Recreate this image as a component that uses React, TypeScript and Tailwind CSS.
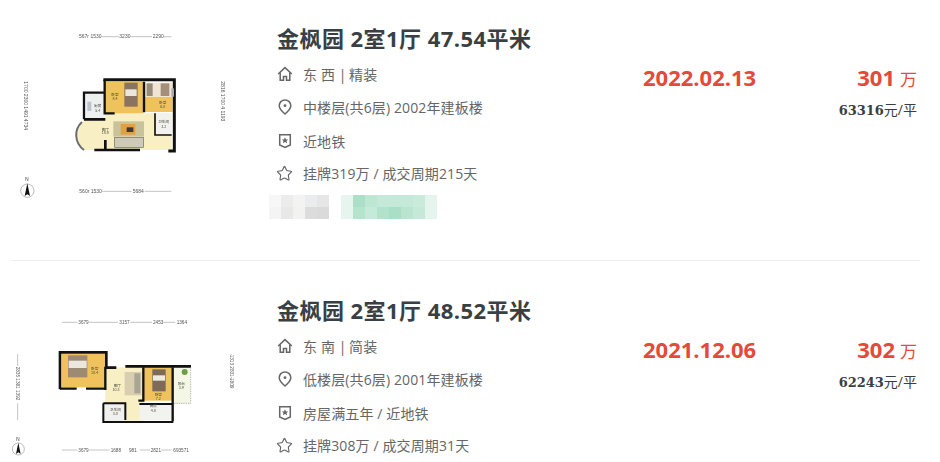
import { Star } from "lucide-react";

const font = "font-['Open_Sans','Noto_Sans_CJK_SC',sans-serif]";

const grayCells = [
  "bg-[#f7f7f7]", "bg-[#ececec]", "bg-[#f3f3f2]", "bg-[#ebecee]", "bg-[#e6e6e6]",
  "bg-[#f4f4f4]", "bg-[#e8e8e8]", "bg-[#f2f2f1]", "bg-[#dcdcdc]", "bg-[#dadadb]",
];
const greenCells = [
  "bg-[#e6f5ee]", "bg-[#acdfc8]", "bg-[#bde6d3]", "bg-[#c4e9d8]", "bg-[#c4e9d8]", "bg-[#c4e9d8]", "bg-[#c8ebdb]", "bg-[#e4f5ed]",
  "bg-[#e6f5ee]", "bg-[#b4e3ce]", "bg-[#c6ead9]", "bg-[#b2e2cc]", "bg-[#a9dfc6]", "bg-[#b8e4d0]", "bg-[#c4e9d8]", "bg-[#e4f5ed]",
];

function HouseIcon() {
  return (
    <svg width="16" height="16" viewBox="0 0 16 16" fill="none" stroke="#666" strokeWidth="1.5">
      <path d="M1.2 8 8 1.600 14.800 8" />
      <path d="M3.200 6.400v7.800h3.300V10.400h3v3.800h3.300V6.400" />
    </svg>
  );
}

function PinIcon() {
  return (
    <svg width="16" height="16" viewBox="0 0 16 16" fill="none" stroke="#666" strokeWidth="1.5">
      <path d="M8 15C4.800 12.200 2.200 9.600 2.200 6.700a5.800 5.800 0 0 1 11.600 0c0 2.900-2.600 5.500-5.800 8.300Z" />
      <circle cx="8" cy="6.700" r="1.400" fill="#666" stroke="none" />
    </svg>
  );
}

function BadgeIcon() {
  return (
    <svg width="16" height="16" viewBox="0 0 16 16" fill="none" stroke="#666" strokeWidth="1.5">
      <path d="M2.700 1.700h10.600v10.200L8 14.400l-5.300-2.500Z" />
      <path d="m8 4.300 1 2.100 2.200.2-1.700 1.400.6 2.200L8 9l-2.100 1.200.6-2.200-1.700-1.400L7 6.400Z" fill="#666" stroke="none" />
    </svg>
  );
}

function InfoLine({ icon, text, className }: { icon: React.ReactNode; text: string; className: string }) {
  return (
    <div className={`flex items-center h-[20px] text-[14px] tracking-[0.12px] text-[#666] ${className}`}>
      <span className="w-[26px] shrink-0 flex">{icon}</span>
      <span className="whitespace-pre">{text}</span>
    </div>
  );
}

function PlanOne() {
  return (
    <svg width="260" height="230" viewBox="0 0 780 690" className="blur-[0.6px]">
      <g fontSize="15" fill="#555" fontFamily="Liberation Sans, sans-serif">
        <text x="237" y="115">567r 1530</text>
        <text x="358" y="115">3230</text>
        <text x="458" y="115">2290</text>
        <text x="238" y="580">560r 1530</text>
        <text x="398" y="580">5684</text>
        <text transform="translate(71 244) rotate(90)">1700  2300  1491 4734</text>
        <text transform="translate(663 244) rotate(90)">2816  1700  4 1193</text>
      </g>
      <path d="M305 110h52M392 110h64M490 110h24M305 574h90M434 574h80" stroke="#888" strokeWidth="1.500" />
      <path d="M250 365C225 385 225 430 250 450H515V340H316V358H250Z" fill="#f8efc4" />
      <rect x="316" y="245" width="114" height="95" fill="#efc25e" />
      <rect x="434" y="290" width="84" height="46" fill="#efc25e" />
      <rect x="434" y="248" width="84" height="42" fill="#efe5d2" />
      <rect x="440" y="250" width="18" height="38" fill="#9a8a78" />
      <rect x="482" y="250" width="26" height="38" fill="#a58f7c" />
      <rect x="373" y="248" width="40" height="72" fill="#8a7361" />
      <rect x="376" y="268" width="34" height="20" fill="#ece7dc" />
      <rect x="258" y="282" width="56" height="74" fill="#eef0f0" />
      <rect x="262" y="305" width="12" height="28" fill="#b9c4cc" />
      <rect x="468" y="342" width="46" height="60" fill="#f1f1ef" />
      <rect x="340" y="364" width="92" height="46" fill="#c9c39c" />
      <rect x="362" y="372" width="44" height="32" fill="#e0a145" />
      <rect x="380" y="382" width="20" height="14" fill="#3d3a33" />
      <rect x="344" y="412" width="86" height="30" fill="#cfc9b8" stroke="#6a665c" strokeWidth="2" />
      <g fill="none" stroke="#111">
        <path d="M310 239h213v214h-18" strokeWidth="9" />
        <path d="M252 358v-80h60M314 240v100h30M432 245v92M320 340h20" strokeWidth="7" />
        <path d="M252 358h64M316 420v28M283 450h137" strokeWidth="8" />
        <path d="M465 340v65h50" strokeWidth="5" />
      </g>
      <path d="M518 265v25" stroke="#aaa" strokeWidth="8" />
      <path d="M246 366c-24 22-24 62 6 84" fill="none" stroke="#6c6c6c" strokeWidth="6" />
      <g fontSize="11" fill="#4a4a3a" fontFamily="Noto Sans CJK SC, sans-serif" textAnchor="middle">
        <text x="345" y="288">卧室</text>
        <text x="345" y="301">8.4</text>
        <text x="488" y="312">卧室</text>
        <text x="488" y="325">6.0</text>
        <text x="293" y="322">厨房</text>
        <text x="293" y="335">5.4</text>
        <text x="491" y="368">卫生间</text>
        <text x="491" y="383">3.2</text>
        <text x="316" y="392">客厅</text>
        <text x="316" y="402">18.8</text>
      </g>
      <circle cx="82" cy="572" r="20" fill="#fff" stroke="#999" strokeWidth="2" />
      <path d="M82 550 74 588l8-5 8 5Z" fill="#111" />
      <text x="76" y="543" fontSize="14" fill="#333" fontFamily="Liberation Sans, sans-serif">N</text>
    </svg>
  );
}

function PlanTwo() {
  return (
    <svg width="260" height="230" viewBox="0 -54 780 690" className="blur-[0.6px]">
      <g fontSize="14" fill="#555" fontFamily="Liberation Sans, sans-serif">
        <text x="235" y="102">3679</text>
        <text x="358" y="102">3157</text>
        <text x="459" y="102">2453</text>
        <text x="530" y="102">1364</text>
        <text x="235" y="485">3679</text>
        <text x="332" y="485">1688</text>
        <text x="387" y="485">981</text>
        <text x="452" y="485">2821</text>
        <text x="520" y="485">693571</text>
        <text transform="translate(48 230) rotate(90)">2835  1381  1392</text>
        <text transform="translate(689 194) rotate(90)">1313  2831  1809</text>
      </g>
      <path d="M186 97h46M268 97h86M390 97h66M490 97h36M186 480h46M268 480h60M420 480h30M484 480h30M53 192v36M53 340v50M694 192v4M694 260v10" stroke="#888" strokeWidth="1.500" />
      <rect x="186" y="192" width="130" height="100" fill="#efc25e" />
      <rect x="316" y="232" width="115" height="160" fill="#f8efc4" />
      <rect x="431" y="232" width="86" height="100" fill="#efc25e" />
      <rect x="520" y="232" width="52" height="110" fill="#f4f6e6" />
      <rect x="312" y="342" width="66" height="50" fill="#f0f0ee" />
      <rect x="418" y="342" width="100" height="48" fill="#f2f2ef" />
      <rect x="204" y="196" width="58" height="66" fill="#9c8a72" />
      <rect x="206" y="212" width="54" height="22" fill="#ebe7de" />
      <rect x="374" y="246" width="50" height="70" fill="#d9ceb0" />
      <rect x="403" y="250" width="18" height="60" fill="#a8a498" />
      <rect x="457" y="238" width="40" height="66" fill="#7d6a58" />
      <rect x="459" y="256" width="36" height="16" fill="#efeae0" />
      <circle cx="554" cy="246" r="9" fill="#6f9c44" />
      <g fill="none" stroke="#111">
        <path d="M180 298v-111h139v46h30M376 229h197" strokeWidth="8" />
        <path d="M180 296h50M258 296h56M316 230v70M430 232v100h-15M518 232v162" strokeWidth="7" />
        <path d="M310 340v56h210M310 340h66v50M418 342h100" strokeWidth="6" />
      </g>
      <path d="M572 232v108h-50" fill="none" stroke="#9a9a9a" strokeWidth="2" strokeDasharray="4 3" />
      <g fontSize="11" fill="#4a4a3a" fontFamily="Noto Sans CJK SC, sans-serif" textAnchor="middle">
        <text x="284" y="240">卧室</text>
        <text x="284" y="252">10.4</text>
        <text x="352" y="290">客厅</text>
        <text x="348" y="302">10.3</text>
        <text x="475" y="318">卧室</text>
        <text x="475" y="330">7.2</text>
        <text x="544" y="284">阳台</text>
        <text x="544" y="296">3.9</text>
        <text x="346" y="362">卫生间</text>
        <text x="346" y="374">3.0</text>
        <text x="460" y="352">厨房</text>
        <text x="460" y="365">4.8</text>
      </g>
      <circle cx="55" cy="477" r="18" fill="#fff" stroke="#999" strokeWidth="2" />
      <path d="M55 458 48 492l7-5 7 5Z" fill="#111" />
      <text x="49" y="452" fontSize="14" fill="#333" fontFamily="Liberation Sans, sans-serif">N</text>
    </svg>
  );
}

type Listing = {
  plan: React.ReactNode;
  title: string;
  orient: string;
  floor: string;
  tag: string;
  deal: string;
  date: string;
  price: string;
  unit: string;
};

const listings: Listing[] = [
  {
    plan: <PlanOne />,
    title: "金枫园 2室1厅 47.54平米",
    orient: "东 西 |\u2009精装",
    floor: "中楼层(共6层) 2002年建板楼",
    tag: "近地铁",
    deal: "挂牌319万 / 成交周期215天",
    date: "2022.02.13",
    price: "301",
    unit: "63316",
  },
  {
    plan: <PlanTwo />,
    title: "金枫园 2室1厅 48.52平米",
    orient: "东 南 |\u2009简装",
    floor: "低楼层(共6层) 2001年建板楼",
    tag: "房屋满五年 / 近地铁",
    deal: "挂牌308万 / 成交周期31天",
    date: "2021.12.06",
    price: "302",
    unit: "62243",
  },
];

function Row({ item, blurred }: { item: Listing; blurred?: boolean }) {
  return (
    <div className="flex h-[260px]">
      <div className="w-[277px] shrink-0">{item.plan}</div>
      <div className="w-[366px] shrink-0 pt-[22px]">
        <h2 className="text-[22px] tracking-[0.45px] leading-[33px] font-bold text-[#394043] whitespace-pre">{item.title}</h2>
        <InfoLine icon={<HouseIcon />} text={item.orient} className="mt-[9px]" />
        <InfoLine icon={<PinIcon />} text={item.floor} className="mt-[13px]" />
        <InfoLine icon={<BadgeIcon />} text={item.tag} className="mt-[14px]" />
        <InfoLine
          icon={<Star size={17} strokeWidth={1.6} color="#666" className="-ml-px" />}
          text={item.deal}
          className="mt-[12px]"
        />
        {blurred && (
          <div className="flex gap-[12px] -ml-[8px] mt-[12px]">
            <div className="grid grid-cols-5 w-[60px] h-[24px]">
              {grayCells.map((c, i) => (
                <div key={i} className={c} />
              ))}
            </div>
            <div className="grid grid-cols-8 w-[96px] h-[24px]">
              {greenCells.map((c, i) => (
                <div key={i} className={c} />
              ))}
            </div>
          </div>
        )}
      </div>
      <div className="w-[114px] shrink-0 pt-[62px] text-[22px] leading-[30px] font-bold text-[#e4493b]">
        {item.date}
      </div>
      <div className="flex-1 pr-[23px] pt-[62px] text-right">
        <div className="leading-[30px] text-[#e4493b]">
          <span className="text-[22px] font-bold">{item.price}</span>
          <span className="text-[17px] ml-[5px]">万</span>
        </div>
        <div className="mt-[5px] text-[14px] leading-[20px] text-[#394043]">
          <span className="font-bold font-['DejaVu_Serif',serif] text-[13px]">{item.unit}</span>元/平
        </div>
      </div>
    </div>
  );
}

export default function App() {
  return (
    <div className={`h-[462px] w-[940px] overflow-hidden bg-white ${font}`}>
      <Row item={listings[0]} blurred />
      <div className="ml-[11px] w-[909px] h-px bg-[#eeeeee]" />
      <div className="pt-[11px]">
        <Row item={listings[1]} />
      </div>
    </div>
  );
}
